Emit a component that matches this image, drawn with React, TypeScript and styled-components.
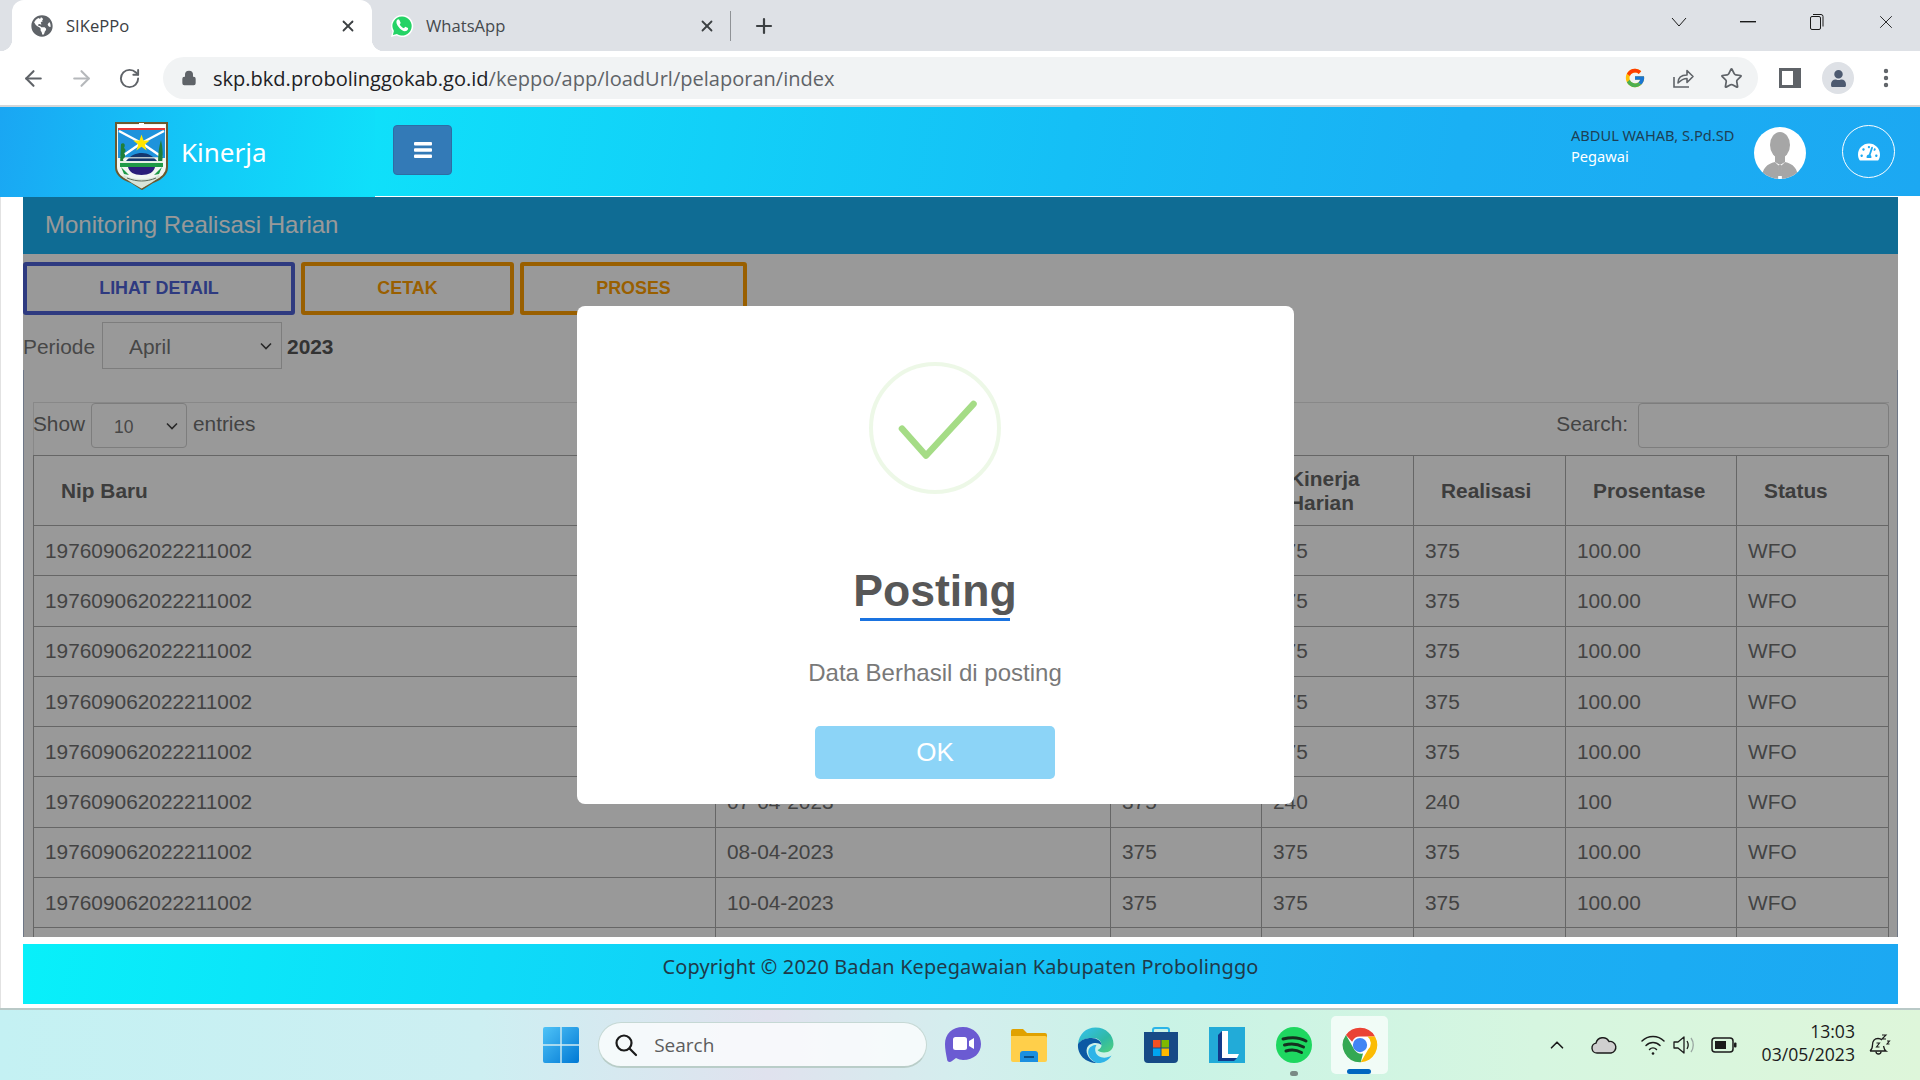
import React from 'react';
import styled, { createGlobalStyle } from 'styled-components';
import { ArrowLeft, ArrowRight, ChevronUp, Lock, MoreVertical, Plus, RotateCw, Star, X } from 'lucide-react';
import { FaGlobeAmericas, FaTachometerAlt, FaUser } from 'react-icons/fa';
import { FcGoogle } from 'react-icons/fc';

const GlobalStyle = createGlobalStyle`
  html, body { margin: 0; padding: 0; overflow: hidden; background: #fff; }
  * { box-sizing: border-box; }
  svg { flex: none; }
`;

const Page = styled.div`
  width: 1920px;
  height: 1080px;
  display: flex;
  flex-direction: column;
  overflow: hidden;
  font-family: 'Liberation Sans', Arial, sans-serif;
`;

/* browser chrome */
const TabStrip = styled.div`
  height: 51px;
  flex: none;
  display: flex;
  align-items: stretch;
  padding-left: 12px;
  background: #dee1e6;
  font-family: 'Open Sans', sans-serif;
`;

const Tab = styled.div<{ $active?: boolean }>`
  position: relative;
  width: ${p => (p.$active ? 360 : 358)}px;
  display: flex;
  align-items: center;
  padding-left: ${p => (p.$active ? 19 : 18)}px;
  padding-right: ${p => (p.$active ? 15 : 14)}px;
  gap: ${p => (p.$active ? 13 : 12)}px;
  color: ${p => (p.$active ? '#3c4043' : '#45494d')};
  background: ${p => (p.$active ? '#fff' : 'transparent')};
  border-radius: 12px 12px 0 0;
  font-size: 16.6px;

  ${p =>
    p.$active &&
    `
    &::before, &::after {
      content: '';
      position: absolute;
      bottom: 0;
      width: 12px;
      height: 12px;
    }
    &::before { left: -12px; background: radial-gradient(circle at 0 0, transparent 12px, #fff 12.5px); }
    &::after { right: -12px; background: radial-gradient(circle at 100% 0, transparent 12px, #fff 12.5px); }
  `}
`;

const TabTitle = styled.span`
  flex: 1;
`;

const TabDivider = styled.div`
  width: 1px;
  margin: 11px 0 10px;
  background: #8f9296;
`;

const NewTab = styled.div`
  width: 66px;
  display: flex;
  align-items: center;
  justify-content: center;
  color: #3c4043;
`;

const WindowControls = styled.div`
  margin-left: auto;
  display: flex;
  align-items: center;
  padding-bottom: 8px;
`;

const WindowButton = styled.div<{ $w: number }>`
  width: ${p => p.$w}px;
  display: flex;
  justify-content: center;
`;

const Toolbar = styled.div`
  height: 56px;
  flex: none;
  display: flex;
  align-items: flex-start;
  padding: 6px 0 0 9px;
  background: #fff;
  border-bottom: 2px solid #d4d6d8;
`;

const ToolButton = styled.div<{ $dim?: boolean }>`
  width: 48px;
  height: 42px;
  display: flex;
  align-items: center;
  justify-content: center;
  color: ${p => (p.$dim ? '#b5b8bb' : '#5f6368')};
`;

const Omnibox = styled.div`
  width: 1595px;
  height: 42px;
  margin: 0 8px 0 10px;
  display: flex;
  align-items: center;
  padding: 0 3px 0 18px;
  border-radius: 21px;
  background: #f1f3f4;
`;

const UrlText = styled.div`
  margin-left: 16px;
  font-family: 'Open Sans', sans-serif;
  font-size: 20.05px;
  color: #5f6368;

  b {
    font-weight: 400;
    color: #202124;
  }
`;

const OmniIcons = styled.div`
  margin-left: auto;
  display: flex;
`;

const ProfileDot = styled.div`
  width: 32px;
  height: 32px;
  border-radius: 50%;
  background: #dee1e6;
  display: flex;
  align-items: center;
  justify-content: center;
  color: #4d5a70;
`;

/* site header */
const SiteHeader = styled.header`
  height: 90px;
  flex: none;
  display: flex;
`;

const Brand = styled.div`
  width: 375px;
  display: flex;
  align-items: flex-start;
  padding: 15px 0 0 115px;
  background: linear-gradient(100deg, #1aa6f3 0%, #12cdf8 60%, #0fe0fa 100%);
`;

const BrandName = styled.div`
  margin: 10px 0 0 13px;
  font-family: 'Noto Sans', sans-serif;
  font-size: 26px;
  line-height: 40px;
  color: #fff;
`;

const Navbar = styled.div`
  flex: 1;
  display: flex;
  align-items: flex-start;
  padding: 18px 25px 0 18px;
  border-bottom: 1px solid #fff;
  background: linear-gradient(100deg, #0fe0fa 0%, #15bff6 45%, #1ab0f4 70%, #1ca8f2 100%);
`;

const MenuButton = styled.div`
  width: 59px;
  height: 50px;
  display: flex;
  align-items: center;
  justify-content: center;
  border: 1px solid #2e6da4;
  border-radius: 4px;
  background: #337ab7;
`;

const UserBlock = styled.div`
  margin-left: auto;
  width: 183px;
  font-family: 'Noto Sans', sans-serif;
  font-size: 14.6px;
  line-height: 21px;
  color: #1d3f55;
`;

const UserRole = styled.div`
  color: #fff;
`;

const AvatarCircle = styled.div`
  width: 52px;
  height: 52px;
  margin-top: 2px;
  border-radius: 50%;
  background: #fff;
  overflow: hidden;
`;

const GaugeCircle = styled.div`
  width: 53px;
  height: 53px;
  margin-left: 36px;
  display: flex;
  align-items: center;
  justify-content: center;
  border: 1px solid #fff;
  border-radius: 50%;
  color: #fff;
`;

/* main area */
const Main = styled.main`
  flex: 1;
  display: flex;
  flex-direction: column;
  padding: 0 22px 4px 23px;
  background: #fff;
  box-shadow: inset 1px 0 #e2e2e2;
`;

const Panel = styled.section`
  position: relative;
  height: 740px;
  flex: none;
  overflow: hidden;
  background: #fff;
`;

const PanelTitle = styled.div`
  height: 57px;
  display: flex;
  align-items: center;
  padding: 0 0 1px 22px;
  font-size: 24px;
  color: #fff;
  background: #19b4f7;
`;

const ActionRow = styled.div`
  display: flex;
  gap: 6px;
  padding-top: 8px;
`;

const ActionButton = styled.div<{ $color: string; $w: number }>`
  width: ${p => p.$w}px;
  height: 53px;
  display: flex;
  align-items: center;
  justify-content: center;
  border: 4px solid ${p => p.$color};
  border-radius: 3px;
  color: ${p => p.$color};
  font-size: 17.9px;
  font-weight: 700;
`;

const PeriodRow = styled.div`
  height: 47px;
  margin-top: 7px;
  padding-top: 2px;
  display: flex;
  align-items: center;
  font-size: 20.9px;
  color: #777;
`;

const chevron =
  "url(\"data:image/svg+xml,%3Csvg xmlns='http://www.w3.org/2000/svg' width='12' height='8' viewBox='0 0 12 8' fill='none' stroke='%23444' stroke-width='1.600'%3E%3Cpath d='M1 1.500l5 5 5-5'/%3E%3C/svg%3E\")";

const FormSelect = styled.select<{ $w: number; $h: number; $pad: number; $fs: number; $arrow: number }>`
  appearance: none;
  width: ${p => p.$w}px;
  height: ${p => p.$h}px;
  padding: 2px 0 0 ${p => p.$pad}px;
  border: 1px solid #d0d0d0;
  border-radius: 0;
  background: #fff ${chevron} no-repeat right ${p => p.$arrow}px center;
  color: #777;
  font-family: inherit;
  font-size: ${p => p.$fs}px;
`;

const PeriodSelect = styled(FormSelect)`
  margin: -2px 0 0 7px;
`;

const YearLabel = styled.b`
  margin-left: 5px;
  color: #555;
`;

const ContentBox = styled.div`
  margin-top: 1px;
  padding: 32px 8px 0 9px;
  border-left: 1px solid #b8c6e0;
  border-right: 1px solid #b8c6e0;
`;

const TableWrap = styled.div`
  border-top: 1px solid #e3e3e3;
`;

const Controls = styled.div`
  height: 52px;
  display: flex;
  align-items: flex-start;
  font-size: 20.8px;
  line-height: 42px;
  color: #717171;
  box-shadow: inset 1px 0 #e3e3e3;
`;

const LengthSelect = styled(FormSelect)`
  margin: 0 6px;
  border-radius: 4px;
`;

const SearchLabel = styled.span`
  margin-left: auto;
`;

const SearchInput = styled.input`
  width: 251px;
  height: 45px;
  margin-left: 10px;
  border: 1px solid #d0d0d0;
  border-radius: 4px;
  background: #fff;
`;

const DataTable = styled.table`
  width: 1855px;
  table-layout: fixed;
  border-collapse: collapse;
  font-size: 20.85px;
  color: #717171;
`;

const Th = styled.th<{ $w: number }>`
  width: ${p => p.$w}px;
  height: 70px;
  padding: 0 10px 0 27px;
  border: 1px solid #aaa;
  text-align: left;
  line-height: 24px;
  color: #666;
`;

const Td = styled.td`
  height: 50.3px;
  padding: 0 11px;
  border: 1px solid #aaa;
`;

/* modal */
const Overlay = styled.div`
  position: absolute;
  inset: 0;
  display: flex;
  align-items: flex-start;
  padding: 109px 0 0 554px;
  background: rgba(0, 0, 0, 0.4);
`;

const Modal = styled.div`
  width: 717px;
  height: 498px;
  display: flex;
  flex-direction: column;
  align-items: center;
  padding: 56px 1px 0 0;
  border-radius: 8px;
  background: #fff;
`;

const ModalTitle = styled.div`
  margin-top: 72px;
  font-size: 44.6px;
  line-height: 50px;
  font-weight: 700;
  color: #575757;
`;

const TitleRule = styled.div`
  width: 150px;
  height: 3px;
  margin-top: 2px;
  background: #1a73e0;
`;

const ModalText = styled.div`
  margin-top: 37px;
  font-size: 24px;
  line-height: 30px;
  color: #797979;
`;

const OkButton = styled.div`
  width: 240px;
  height: 53px;
  margin-top: 38px;
  display: flex;
  align-items: center;
  justify-content: center;
  border-radius: 5px;
  background: #8cd4f7;
  color: #fff;
  font-size: 26px;
`;

const Footer = styled.footer`
  height: 60px;
  flex: none;
  margin-top: 7px;
  padding-top: 8px;
  text-align: center;
  font-family: 'Noto Sans', sans-serif;
  font-size: 19.9px;
  line-height: 30px;
  letter-spacing: 0.15px;
  color: #1f3a4a;
  background: linear-gradient(100deg, #08f0fa 0%, #14c6f6 50%, #1ab0f4 75%, #1ca8f2 100%);
`;

/* taskbar */
const Taskbar = styled.div`
  height: 72px;
  flex: none;
  display: flex;
  align-items: center;
  padding-left: 532px;
  border-top: 2px solid #b9c9c7;
  background: linear-gradient(90deg, #c4f1f3 0%, #cdeff2 25%, #e0e2ee 40%, #d4eeee 50%, #c9f3e6 60%, #d6f6e0 80%, #def6da 100%);
`;

const TaskSlot = styled.div<{ $active?: boolean }>`
  position: relative;
  width: 57px;
  height: 58px;
  margin-right: 9.2px;
  display: flex;
  align-items: center;
  justify-content: center;
  border-radius: 5px;
  background: ${p => (p.$active ? 'rgba(255,255,255,0.7)' : 'transparent')};
`;

const RunningDot = styled.span`
  position: absolute;
  left: 50%;
  bottom: -2px;
  width: 8px;
  height: 5px;
  margin-left: -4px;
  border-radius: 3px;
  background: #7a8a85;
`;

const ActiveBar = styled.span`
  position: absolute;
  left: 16px;
  bottom: 0;
  width: 24px;
  height: 5px;
  border-radius: 3px;
  background: #0067c0;
`;

const SearchPill = styled.div`
  width: 329px;
  height: 46px;
  margin-right: 7px;
  display: flex;
  align-items: center;
  gap: 16px;
  padding-left: 15px;
  border: 1px solid #c5d8d4;
  border-bottom: 2px solid #b9cdc8;
  border-radius: 23px;
  background: rgba(255, 255, 255, 0.75);
  font-family: 'Open Sans', sans-serif;
  font-size: 19px;
  color: #5c5c5c;
`;

const Tray = styled.div`
  position: absolute;
  right: 17px;
  display: flex;
  align-items: center;
  height: 70px;
`;

const TraySlot = styled.div<{ $w: number }>`
  width: ${p => p.$w}px;
  display: flex;
  justify-content: center;
`;

const Clock = styled.div`
  width: 100px;
  margin-top: -4px;
  text-align: right;
  font-family: 'Open Sans', sans-serif;
  font-size: 17.6px;
  line-height: 23px;
  color: #1b1b1b;
  white-space: nowrap;
`;

const CrestLogo = () => (
  <svg width="53" height="68" viewBox="0 0 53 68">
    <path d="M1 1h51v44c0 8-6 12-14 15l-11 7-11-7C7 57 1 53 1 45z" fill="#f2f6f2" stroke="#6a5a30" strokeWidth="2" />
    <rect x="3" y="3" width="47" height="4" fill="#fff" />
    <rect x="3" y="6" width="47" height="2" fill="#e53935" />
    <rect x="24" y="1" width="5" height="5" fill="#fff" />
    <rect x="3" y="8" width="47" height="28" fill="#1e93dc" />
    <path d="M4 9l22.500 12L49 9M6 35l20.500-14L47 35" fill="none" stroke="#fff" strokeWidth="2.400" />
    <path d="M26.500 12.500l2 6 6.300.1-5 3.800 1.800 6-5.100-3.600-5.100 3.600 1.800-6-5-3.800 6.300-.1z" fill="#ffe600" />
    <path d="M11 39c5-6 10-8 16-8s11 3 15 8z" fill="#14376e" />
    <rect x="9" y="35" width="35" height="1.500" fill="#dfe9e0" opacity="0.8" />
    <path d="M6 22c3-2 5 1 3 4 2 1 2 4 0 5 2 2 1 5-1 6l1 5H5zM46 18c-2 6-3 14-3 24h4c1-8 1-16-1-24z" fill="#1f7f38" />
    <rect x="5" y="39" width="43" height="2" fill="#e6efe6" />
    <rect x="5" y="41" width="43" height="4" fill="#1f9a47" />
    <path d="M13 45h27c-1 5-6 8-13.500 8S14 50 13 45z" fill="#2a1d7a" />
    <path d="M6 45l8 8-5-1zM47 45l-8 8 5-1z" fill="#1f9a47" />
    <path d="M9 53c5 3 11 4 17.500 4S39 56 44 53l1 2-9 6-9.500 5.500L17 61l-9-6z" fill="#d8e4d8" />
    <path d="M12 56c5 2 10 3 14.500 3s10-1 14.500-3" fill="none" stroke="#5a6a5a" strokeWidth="1" />
  </svg>
);

const WhatsAppIcon = () => (
  <svg width="24" height="24" viewBox="0 0 24 24">
    <path d="M12 1a11 11 0 0 0-9.500 16.500L1 23l5.700-1.500A11 11 0 1 0 12 1z" fill="#fff" />
    <path d="M12 2.500a9.500 9.500 0 0 0-8.100 14.500l-1 3.900 4-1A9.500 9.500 0 1 0 12 2.500z" fill="#25d366" />
    <path d="M9 7c-.6 0-1.800.8-1.800 2.800 0 2 1.500 4 1.700 4.200.2.300 2.800 4.400 6.900 5 .9 0 2.700-.8 3-2 .1-.5.100-1 0-1.200l-2.800-1.400-1.200 1.500c-1.800-.7-3.300-2-4.300-3.800l1-1.300-1.200-2.800c-.1-.5-.8-.9-1.300-1z" fill="#fff" transform="translate(-.8 -1.700)" />
  </svg>
);

const AvatarBust = () => (
  <svg width="52" height="52" viewBox="0 0 52 52">
    <ellipse cx="26" cy="18" rx="10" ry="13" fill="#a6a6a6" />
    <path d="M21 28h10v7l-5 3-5-3z" fill="#a6a6a6" />
    <path d="M8 52c0-11 5-15 13-17l4 4-1 13zM44 52c0-11-5-15-13-17l-4 4 1 13z" fill="#a6a6a6" />
    <path d="M24.500 38h3l1 11h-5z" fill="#a6a6a6" />
  </svg>
);

const ShareIcon = () => (
  <svg width="24" height="24" viewBox="0 0 24 24" fill="none" stroke="#5f6368" strokeWidth="1.600">
    <path d="M3 11v10h15" />
    <path d="M7 17c0-5 3-8 9-8V4.500l6 6-6 6V12.500c-4 0-6 1.500-9 4.500z" strokeLinejoin="round" />
  </svg>
);

const SidePanelIcon = () => (
  <svg width="22" height="20" viewBox="0 0 22 20">
    <path d="M1.500 1.500h19v17h-19z" fill="none" stroke="#5f6368" strokeWidth="3" />
    <rect x="14" y="1" width="7" height="18" fill="#5f6368" />
  </svg>
);

const RestoreIcon = () => (
  <svg width="16" height="18" viewBox="0 0 16 18" fill="none" stroke="#1a1a1a" strokeWidth="1">
    <rect x="1.500" y="3.500" width="10" height="13" rx="1.500" />
    <path d="M4 1.500h8a2 2 0 0 1 2 2v10" />
  </svg>
);

const MenuIcon = () => (
  <svg width="20" height="18" viewBox="0 0 20 18" fill="#fff">
    <rect x="1" y="1" width="18" height="3.400" rx="1" />
    <rect x="1" y="7.300" width="18" height="3.400" rx="1" />
    <rect x="1" y="13.600" width="18" height="3.400" rx="1" />
  </svg>
);

const SuccessIcon = () => (
  <svg width="132" height="132" viewBox="0 0 132 132" fill="none">
    <circle cx="66" cy="66" r="64" stroke="#a5dc86" strokeOpacity="0.2" strokeWidth="4" />
    <path d="M33 66.600L57 93.600 104.500 42" stroke="#a5dc86" strokeWidth="6.500" strokeLinecap="round" strokeLinejoin="round" />
  </svg>
);

const WindowsLogo = () => (
  <svg width="36" height="36" viewBox="0 0 36 36">
    <defs>
      <linearGradient id="win" x1="0" y1="0" x2="1" y2="1">
        <stop offset="0" stopColor="#4fc3f7" />
        <stop offset="1" stopColor="#0078d4" />
      </linearGradient>
    </defs>
    <path d="M0 2a2 2 0 0 1 2-2h15.300v17.300H0zM18.700 0H34a2 2 0 0 1 2 2v15.300H18.700zM0 18.700h17.300V36H2a2 2 0 0 1-2-2zM18.700 18.700H36V34a2 2 0 0 1-2 2H18.700z" fill="url(#win)" />
  </svg>
);

const ChatLogo = () => (
  <svg width="38" height="36" viewBox="0 0 38 36">
    <path d="M19 0C8 0 1 7 1 17c0 5 1 10 2 15 0 3 3 4 5 2l4-3c2 1 5 2 7 2 11 0 18-7 18-16S30 0 19 0z" fill="#6b5bd2" />
    <rect x="9" y="10" width="14" height="13" rx="2.500" fill="#fff" />
    <path d="M25 14l5-3v11l-5-3z" fill="#fff" />
  </svg>
);

const FolderLogo = () => (
  <svg width="36" height="34" viewBox="0 0 36 34">
    <path d="M0 3a2 2 0 0 1 2-2h10l4 4h18a2 2 0 0 1 2 2v5H0z" fill="#e0a100" />
    <path d="M0 8h34a2 2 0 0 1 2 2v22a2 2 0 0 1-2 2H2a2 2 0 0 1-2-2z" fill="#ffcf4a" />
    <path d="M9 34v-8a3 3 0 0 1 3-3h12a3 3 0 0 1 3 3v8z" fill="#1b8fe0" />
    <rect x="13" y="28" width="10" height="2" fill="#0b4f86" />
  </svg>
);

const EdgeLogo = () => (
  <svg width="37" height="37" viewBox="0 0 37 37">
    <defs>
      <linearGradient id="edgeA" x1="0" y1="0" x2="1" y2="1">
        <stop offset="0" stopColor="#35c1f1" />
        <stop offset="0.6" stopColor="#2fb9a5" />
        <stop offset="1" stopColor="#52d17c" />
      </linearGradient>
    </defs>
    <path d="M1 17C2 7 9 .5 18.500.5 29 .5 36.500 8 36.500 17c0 5-4 8.500-9.500 8.500-3 0-5.500-1-6.500-2.500 2.500-1 4-2.500 4-5 0-4-3.500-7-8-7C9 11 3.500 13 1 17z" fill="url(#edgeA)" />
    <path d="M1 17c2.500-4 8-6 13.500-6 5 0 10 3 10 7-3-3-12-3-14.500 3-2 6 3 13 10 15C9 36 0 28 1 17z" fill="#0c59a4" />
    <path d="M20 36c-6-2-10-8-8.500-13 1-3 4-5 8-5-2 3-2 8 2 11 4 2.500 9 2 13-.5-3 5-8.500 8-14.500 7.500z" fill="#2fb4e8" />
  </svg>
);

const StoreLogo = () => (
  <svg width="36" height="36" viewBox="0 0 36 36">
    <path d="M10 5V3a2 2 0 0 1 2-2h12a2 2 0 0 1 2 2v2" fill="none" stroke="#2bb5e8" strokeWidth="2" />
    <path d="M1 5h34v27a4 4 0 0 1-4 4H5a4 4 0 0 1-4-4z" fill="#164a86" />
    <rect x="10" y="13" width="7.500" height="7.500" fill="#f25022" />
    <rect x="18.500" y="13" width="7.500" height="7.500" fill="#7fba00" />
    <rect x="10" y="21.500" width="7.500" height="7.500" fill="#00a4ef" />
    <rect x="18.500" y="21.500" width="7.500" height="7.500" fill="#ffb900" />
  </svg>
);

const LLogo = () => (
  <svg width="36" height="36" viewBox="0 0 36 36">
    <rect width="36" height="36" fill="#22abd8" />
    <path d="M13 4h6v23h11l-2 4H13z" fill="#fff" />
    <path d="M9 8l4-4v27h15l-3 3H9z" fill="#123a8a" />
  </svg>
);

const SpotifyLogo = () => (
  <svg width="36" height="36" viewBox="0 0 36 36" fill="none">
    <circle cx="18" cy="18" r="18" fill="#1ed760" />
    <path d="M7 12c8-2 16-2 23 2M8.500 18c7-2 13.500-1 19 2M10 24c5-1.500 11-1 15.500 1.500" stroke="#14301f" strokeWidth="3" strokeLinecap="round" />
  </svg>
);

const ChromeLogo = () => (
  <svg width="36" height="36" viewBox="0 0 48 48">
    <circle cx="24" cy="24" r="23.500" fill="#fff" />
    <path d="M24 1a23 23 0 0 1 20 11.500H24a11.500 11.500 0 0 0-10.500 7L5.200 10.700A23 23 0 0 1 24 1z" fill="#ea4335" />
    <path d="M44 12.500A23 23 0 0 1 25 47l10-17.300a11.500 11.500 0 0 0-1-17.200z" fill="#fbbc04" />
    <path d="M25 47A23 23 0 0 1 5.200 10.700l9.800 17a11.500 11.500 0 0 0 13 7.600z" fill="#34a853" />
    <circle cx="24" cy="24" r="9.500" fill="#4285f4" />
  </svg>
);

const CloudIcon = () => (
  <svg width="26" height="18" viewBox="0 0 26 18">
    <path d="M6 17a5 5 0 0 1-1-9.900A7 7 0 0 1 18 5.500 5.800 5.800 0 0 1 20 17z" fill="#cfcfcf" stroke="#1b1b1b" strokeWidth="1.400" />
  </svg>
);

const WifiIcon = () => (
  <svg width="26" height="24" viewBox="0 0 26 24" fill="none" stroke="#1b1b1b" strokeWidth="1.500" strokeLinecap="round">
    <path d="M2 8c6-6 16-6 22 0M6 12.500c4-4 10-4 14 0M9.500 16.500c2-2 5-2 7 0" />
    <circle cx="13" cy="20.500" r="1.300" fill="#1b1b1b" stroke="none" />
  </svg>
);

const VolumeIcon = () => (
  <svg width="26" height="22" viewBox="0 0 26 22" fill="none" stroke="#1b1b1b" strokeWidth="1.300">
    <path d="M2 8h4l6-5v16l-6-5H2z" strokeLinejoin="round" />
    <path d="M15 7c1.500 2.500 1.500 5.500 0 8" />
    <path d="M19 4c3 4 3 10 0 14" stroke="#9aa7a2" />
  </svg>
);

const BatteryIcon = () => (
  <svg width="26" height="16" viewBox="0 0 26 16">
    <rect x="1" y="1" width="21" height="14" rx="3" fill="none" stroke="#1b1b1b" strokeWidth="1.500" />
    <rect x="4" y="4" width="11" height="8" fill="#1b1b1b" />
    <rect x="23" y="5.500" width="2.500" height="5" rx="1" fill="#1b1b1b" />
  </svg>
);

const BellIcon = () => (
  <svg width="24" height="24" viewBox="0 0 24 24" fill="none" stroke="#1b1b1b" strokeWidth="1.300">
    <path d="M3 18c2-1.500 2.500-3 2.500-6 0-4 2-6.500 5.500-6.500 2 0 3 .5 4 1.500M3 18h16c-1.500-1-2-2.500-2.500-5" />
    <path d="M9 18.500a2.500 2.500 0 0 0 5 0" />
    <path d="M15 2h4l-4 4h4M20 8h2.500l-2.500 3h2.500" strokeWidth="1.100" />
    <path d="M9.500 10h3l-3 4h3" strokeWidth="1.100" />
  </svg>
);

const SearchGlass = () => (
  <svg width="24" height="24" viewBox="0 0 24 24" fill="none" stroke="#1b1b1b" strokeWidth="2.200">
    <circle cx="10" cy="10" r="7.500" />
    <path d="M15.500 15.500L22 22" strokeLinecap="round" />
  </svg>
);

const NIP = '197609062022211002';

const rows = [
  ['01-04-2023', '375', '375', '375', '100.00'],
  ['03-04-2023', '375', '375', '375', '100.00'],
  ['04-04-2023', '375', '375', '375', '100.00'],
  ['05-04-2023', '375', '375', '375', '100.00'],
  ['06-04-2023', '375', '375', '375', '100.00'],
  ['07-04-2023', '375', '240', '240', '100'],
  ['08-04-2023', '375', '375', '375', '100.00'],
  ['10-04-2023', '375', '375', '375', '100.00'],
  ['11-04-2023', '375', '375', '375', '100.00']
];

const columns: [string, number][] = [
  ['Nip Baru', 682],
  ['Tanggal', 395],
  ['Target', 151],
  ['Kinerja Harian', 152],
  ['Realisasi', 152],
  ['Prosentase', 171],
  ['Status', 152]
];

const App: React.FC = () => {
  return (
    <Page>
      <GlobalStyle />
      <TabStrip>
        <Tab $active>
          <FaGlobeAmericas size={22} color="#5f6368" />
          <TabTitle>SIKePPo</TabTitle>
          <X size={18} color="#3c4043" strokeWidth={2.4} />
        </Tab>
        <Tab>
          <WhatsAppIcon />
          <TabTitle>WhatsApp</TabTitle>
          <X size={18} color="#3c4043" strokeWidth={2.4} />
        </Tab>
        <TabDivider />
        <NewTab>
          <Plus size={24} strokeWidth={2.2} />
        </NewTab>
        <WindowControls>
          <WindowButton $w={68}>
            <svg width="16" height="10" viewBox="0 0 16 10" fill="none" stroke="#1a1a1a" strokeWidth="1">
              <path d="M1 1l7 8 7-8" />
            </svg>
          </WindowButton>
          <WindowButton $w={69}>
            <svg width="16" height="2" viewBox="0 0 16 2">
              <rect width="16" height="1.400" fill="#1a1a1a" />
            </svg>
          </WindowButton>
          <WindowButton $w={69}>
            <RestoreIcon />
          </WindowButton>
          <WindowButton $w={69}>
            <X size={22} color="#1a1a1a" strokeWidth={1} />
          </WindowButton>
        </WindowControls>
      </TabStrip>

      <Toolbar>
        <ToolButton>
          <ArrowLeft size={25} strokeWidth={2} />
        </ToolButton>
        <ToolButton $dim>
          <ArrowRight size={25} strokeWidth={2} />
        </ToolButton>
        <ToolButton>
          <RotateCw size={23} strokeWidth={2} />
        </ToolButton>
        <Omnibox>
          <Lock size={16} color="#5f6368" fill="#5f6368" />
          <UrlText>
            <b>skp.bkd.probolinggokab.go.id</b>/keppo/app/loadUrl/pelaporan/index
          </UrlText>
          <OmniIcons>
            <ToolButton>
              <FcGoogle size={22} />
            </ToolButton>
            <ToolButton>
              <ShareIcon />
            </ToolButton>
            <ToolButton>
              <Star size={23} strokeWidth={1.8} />
            </ToolButton>
          </OmniIcons>
        </Omnibox>
        <ToolButton>
          <SidePanelIcon />
        </ToolButton>
        <ToolButton>
          <ProfileDot>
            <FaUser size={17} />
          </ProfileDot>
        </ToolButton>
        <ToolButton>
          <MoreVertical size={24} strokeWidth={2.4} />
        </ToolButton>
      </Toolbar>

      <SiteHeader>
        <Brand>
          <CrestLogo />
          <BrandName>Kinerja</BrandName>
        </Brand>
        <Navbar>
          <MenuButton>
            <MenuIcon />
          </MenuButton>
          <UserBlock>
            ABDUL WAHAB, S.Pd.SD
            <UserRole>Pegawai</UserRole>
          </UserBlock>
          <AvatarCircle>
            <AvatarBust />
          </AvatarCircle>
          <GaugeCircle>
            <FaTachometerAlt size={22} />
          </GaugeCircle>
        </Navbar>
      </SiteHeader>

      <Main>
        <Panel>
          <PanelTitle>Monitoring Realisasi Harian</PanelTitle>
          <ActionRow>
            <ActionButton $color="#4d61d5" $w={272}>LIHAT DETAIL</ActionButton>
            <ActionButton $color="#ff9f00" $w={213}>CETAK</ActionButton>
            <ActionButton $color="#ff9f00" $w={227}>PROSES</ActionButton>
          </ActionRow>
          <PeriodRow>
            Periode
            <PeriodSelect $w={180} $h={47} $pad={26} $fs={20.9} $arrow={9} defaultValue="April">
              <option>April</option>
            </PeriodSelect>
            <YearLabel>2023</YearLabel>
          </PeriodRow>
          <ContentBox>
            <TableWrap>
              <Controls>
                Show
                <LengthSelect $w={96} $h={45} $pad={22} $fs={17.5} $arrow={8} defaultValue="10">
                  <option>10</option>
                </LengthSelect>
                entries
                <SearchLabel>Search:</SearchLabel>
                <SearchInput />
              </Controls>
              <DataTable>
                <thead>
                  <tr>
                    {columns.map(([name, w]) => (
                      <Th key={name} $w={w}>
                        {name}
                      </Th>
                    ))}
                  </tr>
                </thead>
                <tbody>
                  {rows.map(r => (
                    <tr key={r[0]}>
                      <Td>{NIP}</Td>
                      {r.map((c, i) => (
                        <Td key={i}>{c}</Td>
                      ))}
                      <Td>WFO</Td>
                    </tr>
                  ))}
                </tbody>
              </DataTable>
            </TableWrap>
          </ContentBox>
          <Overlay>
            <Modal>
              <SuccessIcon />
              <ModalTitle>Posting</ModalTitle>
              <TitleRule />
              <ModalText>Data Berhasil di posting</ModalText>
              <OkButton>OK</OkButton>
            </Modal>
          </Overlay>
        </Panel>
        <Footer>Copyright © 2020 Badan Kepegawaian Kabupaten Probolinggo</Footer>
      </Main>

      <Taskbar>
        <TaskSlot>
          <WindowsLogo />
        </TaskSlot>
        <SearchPill>
          <SearchGlass />
          Search
        </SearchPill>
        <TaskSlot>
          <ChatLogo />
        </TaskSlot>
        <TaskSlot>
          <FolderLogo />
        </TaskSlot>
        <TaskSlot>
          <EdgeLogo />
        </TaskSlot>
        <TaskSlot>
          <StoreLogo />
        </TaskSlot>
        <TaskSlot>
          <LLogo />
        </TaskSlot>
        <TaskSlot>
          <SpotifyLogo />
          <RunningDot />
        </TaskSlot>
        <TaskSlot $active>
          <ChromeLogo />
          <ActiveBar />
        </TaskSlot>
        <Tray>
          <TraySlot $w={44}>
            <ChevronUp size={22} color="#1b1b1b" strokeWidth={1.8} />
          </TraySlot>
          <TraySlot $w={50}>
            <CloudIcon />
          </TraySlot>
          <TraySlot $w={48}>
            <WifiIcon />
          </TraySlot>
          <TraySlot $w={16}>
            <VolumeIcon />
          </TraySlot>
          <TraySlot $w={62}>
            <BatteryIcon />
          </TraySlot>
          <Clock>
            13:03
            <br />
            03/05/2023
          </Clock>
          <TraySlot $w={48}>
            <BellIcon />
          </TraySlot>
        </Tray>
      </Taskbar>
    </Page>
  );
};

export default App;
